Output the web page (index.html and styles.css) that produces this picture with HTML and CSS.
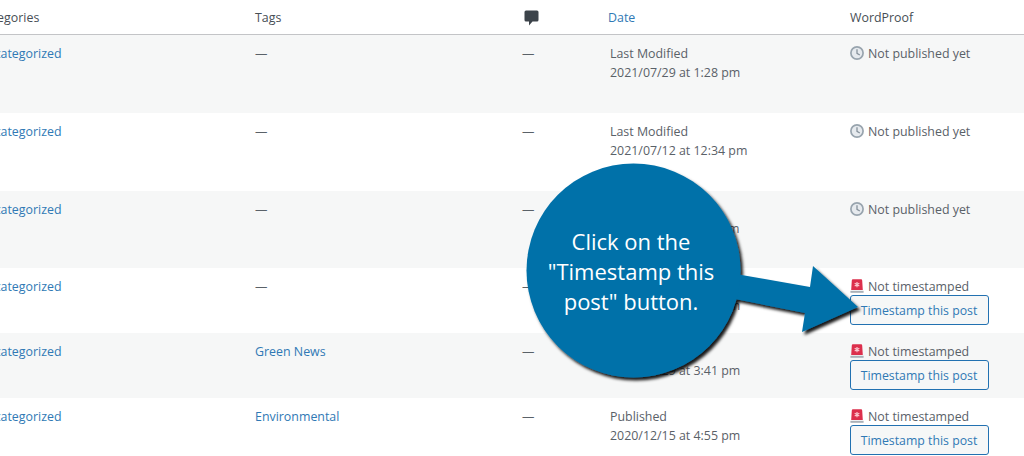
FILE: index.html
```html
<!DOCTYPE html>
<html lang="en">
<head>
<meta charset="utf-8">
<title>Posts</title>
<link rel="stylesheet" href="styles.css">
</head>
<body>
<svg class="defs" width="0" height="0" aria-hidden="true">
  <symbol id="clock" viewBox="0 0 14 14">
    <circle cx="7" cy="7" r="6.100" fill="#e6eaee" stroke="#98a4ae" stroke-width="1.700"/>
    <path d="M7 3.200V7.400L9.800 9" fill="none" stroke="#87929c" stroke-width="1.300"/>
  </symbol>
  <symbol id="siren" viewBox="0 0 14 14">
    <path d="M1.800 1.400Q1.800 .2 3 .2H11Q12.200 .2 12.200 1.400L12.800 11H1.200Z" fill="#dc2f4c"/>
    <path d="M7 3V8.200M4.700 4.300L9.300 6.900M9.300 4.300L4.700 6.900" stroke="#fbc7cf" stroke-width="1.200"/>
    <rect x=".4" y="11.800" width="13.200" height="2" fill="#a9b0b7"/>
  </symbol>
</svg>
<main class="page">
  <div class="row head">
    <div class="cell">Categories</div>
    <div class="cell">Tags</div>
    <div class="cell"><svg class="bubble" width="15" height="16" viewBox="0 0 15 16"><path d="M2 .5H13Q14.500 .5 14.500 2V10Q14.500 11.500 13 11.500H8.500L5 15.500V11.500H2Q.5 11.500 .5 10V2Q.5 .5 2 .5Z" fill="#3c434a"/></svg></div>
    <div class="cell"><a class="sort">Date</a></div>
    <div class="cell">WordProof</div>
  </div>

  <div class="row tall alt">
    <div class="cell"><a>Uncategorized</a></div>
    <div class="cell">—</div>
    <div class="cell">—</div>
    <div class="cell">Last Modified<br>2021/07/29 at 1:28 pm</div>
    <div class="cell"><svg class="ico"><use href="#clock"/></svg>Not published yet</div>
  </div>
  <div class="row tall">
    <div class="cell"><a>Uncategorized</a></div>
    <div class="cell">—</div>
    <div class="cell">—</div>
    <div class="cell">Last Modified<br>2021/07/12 at 12:34 pm</div>
    <div class="cell"><svg class="ico"><use href="#clock"/></svg>Not published yet</div>
  </div>
  <div class="row mid alt">
    <div class="cell"><a>Uncategorized</a></div>
    <div class="cell">—</div>
    <div class="cell">—</div>
    <div class="cell">Last Modified<br>2021/07/09 at 9:17 am</div>
    <div class="cell"><svg class="ico"><use href="#clock"/></svg>Not published yet</div>
  </div>
  <div class="row short">
    <div class="cell"><a>Uncategorized</a></div>
    <div class="cell">—</div>
    <div class="cell">—</div>
    <div class="cell">Published<br>2021/03/02 at 2:15 pm</div>
    <div class="cell"><svg class="ico"><use href="#siren"/></svg>Not timestamped<button class="stamp">Timestamp this post</button></div>
  </div>
  <div class="row short alt">
    <div class="cell"><a>Uncategorized</a></div>
    <div class="cell"><a>Green News</a></div>
    <div class="cell">—</div>
    <div class="cell">Published<br>2021/01/29 at 3:41 pm</div>
    <div class="cell"><svg class="ico"><use href="#siren"/></svg>Not timestamped<button class="stamp">Timestamp this post</button></div>
  </div>
  <div class="row short">
    <div class="cell"><a>Uncategorized</a></div>
    <div class="cell"><a>Environmental</a></div>
    <div class="cell">—</div>
    <div class="cell">Published<br>2020/12/15 at 4:55 pm</div>
    <div class="cell"><svg class="ico"><use href="#siren"/></svg>Not timestamped<button class="stamp">Timestamp this post</button></div>
  </div>
</main>

<aside class="callout">
  <svg class="callout-art" width="1024" height="456" viewBox="0 0 1024 456">
    <defs>
      <filter id="drop" x="-10%" y="-10%" width="125%" height="125%">
        <feDropShadow dx="2.500" dy="3" stdDeviation="1.800" flood-color="#000" flood-opacity=".9"/>
      </filter>
    </defs>
    <g filter="url(#drop)" fill="#0071a9">
      <path d="M730 273L810 287L813 266L858 307L802 332L805 313L730 298Z"/>
      <circle cx="633.500" cy="270.500" r="107"/>
    </g>
  </svg>
  <p class="callout-text">Click on the<br>"Timestamp this<br>post" button.</p>
</aside>
</body>
</html>
```

FILE: styles.css
```css
html, body {
  margin: 0;
  padding: 0;
  width: 1024px;
  height: 456px;
  overflow: hidden;
  background: #fff;
}

body {
  position: relative;
  font-family: "Open Sans", "Noto Sans", sans-serif;
  font-size: 12.4px;
  line-height: 19px;
  color: #5a6168;
}

.defs {
  position: absolute;
}

.page {
  margin-left: -22px;
  width: 1046px;
}

.row {
  display: grid;
  grid-template-columns: 277px 267px 88px 240px 1fr;
  background: #fff;
}

.alt {
  background: #f6f7f7;
}

.head {
  height: 34px;
  border-bottom: 1px solid #c3c4c7;
  align-items: center;
  color: #474e55;
}

.tall { height: 78px; }
.mid { height: 77px; }
.short { height: 65px; }

.row:not(.head) .cell {
  padding-top: 9px;
}

.head .cell {
  display: flex;
  align-items: center;
}

a {
  color: #3079b5;
}

.sort {
  margin-left: -2px;
}

.bubble {
  margin-left: 2px;
  margin-top: 1px;
}

.ico {
  width: 14px;
  height: 14px;
  margin-right: 4px;
  vertical-align: -2px;
}

.stamp {
  display: block;
  box-sizing: border-box;
  width: 139px;
  height: 30px;
  margin-top: -1px;
  padding: 0 1px 0 0;
  border: 1px solid #2271b1;
  border-radius: 3px;
  background: #f6f7f7;
  color: #3079b5;
  font-family: inherit;
  font-size: 12.3px;
  line-height: 19px;
}

.callout {
  position: absolute;
  left: 0;
  top: 0;
}

.callout-art {
  display: block;
}

.callout-text {
  position: absolute;
  left: 525px;
  top: 226px;
  width: 212px;
  margin: 0;
  text-align: center;
  font-family: "Open Sans", "Noto Sans", sans-serif;
  font-size: 22px;
  line-height: 30px;
  color: #fff;
}
```
